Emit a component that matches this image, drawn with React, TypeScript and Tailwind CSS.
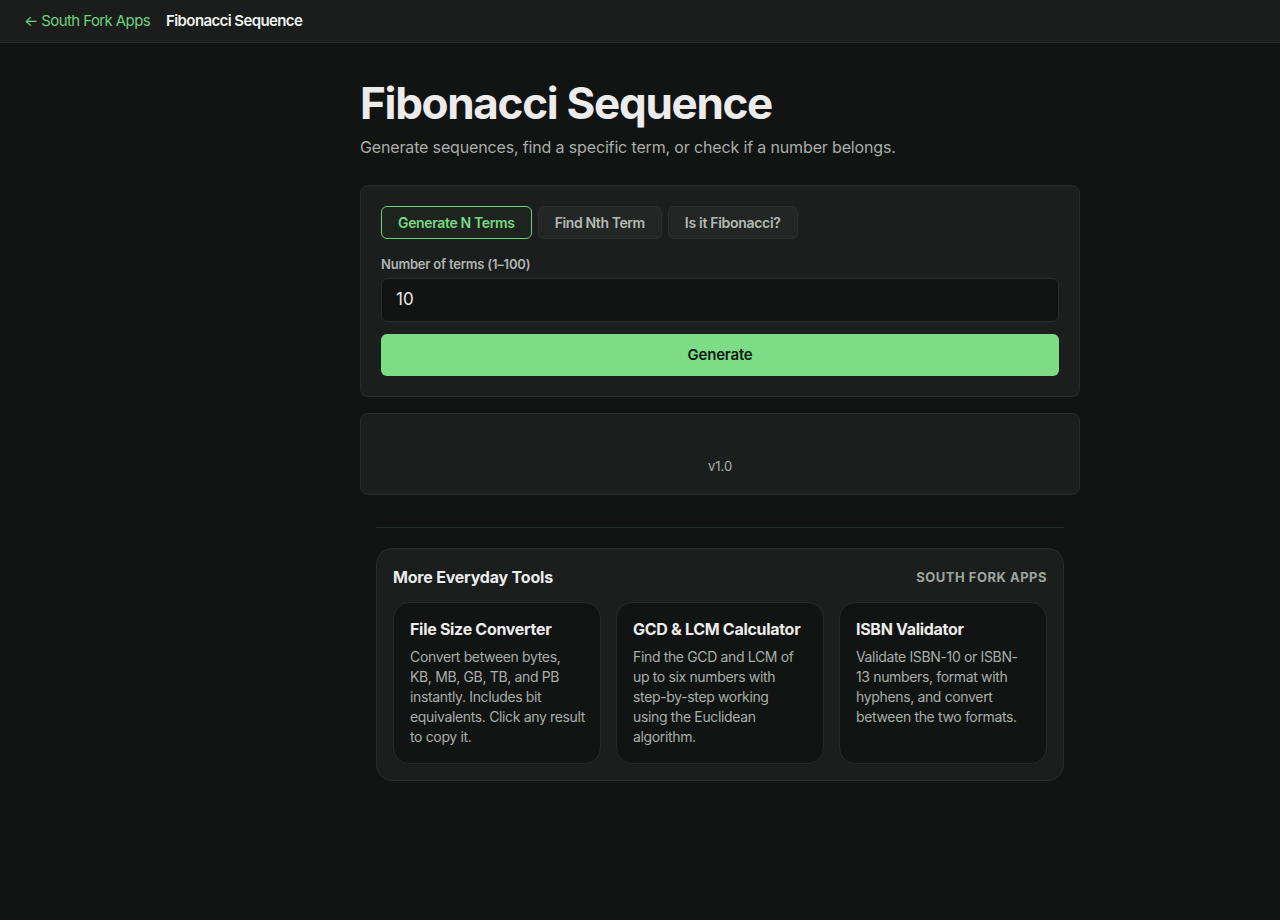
import React from "react";

const tools = [
  {
    title: "File Size Converter",
    lines: ["Convert between bytes,", "KB, MB, GB, TB, and PB", "instantly. Includes bit", "equivalents. Click any result", "to copy it."],
  },
  {
    title: "GCD & LCM Calculator",
    lines: ["Find the GCD and LCM of", "up to six numbers with", "step-by-step working", "using the Euclidean", "algorithm."],
  },
  {
    title: "ISBN Validator",
    lines: ["Validate ISBN-10 or ISBN-", "13 numbers, format with", "hyphens, and convert", "between the two formats."],
  },
];

export default function App() {
  return (
    <div
      className="min-h-[920px] bg-[#121413] text-[#e8e9e8]"
      style={{ fontFamily: "Inter, 'Noto Sans', sans-serif" }}
    >
      <header className="h-[43px] bg-[#1a1d1b] border-b border-[#262b27] flex items-center px-6 gap-4">
        <a className="text-[15px] text-[#6fd17c] tracking-[-0.6px]">← South Fork Apps</a>
        <span className="text-[15px] font-semibold text-[#f0f1f0] tracking-[-0.6px]">Fibonacci Sequence</span>
      </header>

      <main className="w-[720px] ml-[360px] pt-[33px]">
        <h1 className="text-[44px] leading-[54px] font-bold tracking-[-1.3px] text-[#ececec]">Fibonacci Sequence</h1>
        <p className="mt-[5px] text-[16px] leading-[24px] text-[#a9aeaa] tracking-[-0.15px]">
          Generate sequences, find a specific term, or check if a number belongs.
        </p>

        <section className="mt-[26px] bg-[#1b1e1c] border border-[#2a2e2b] rounded-lg p-5">
          <div className="flex gap-[6px]">
            <button className="h-[33px] px-4 rounded-md border border-[#6fd17c] text-[#78d884] text-[14px] font-semibold tracking-[-0.35px] bg-[#1d231e]">
              Generate N Terms
            </button>
            <button className="h-[33px] px-4 rounded-md border border-[#2c302d] bg-[#232624] text-[#b5b9b6] text-[14px] font-semibold tracking-[-0.4px]">
              Find Nth Term
            </button>
            <button className="h-[33px] px-4 rounded-md border border-[#2c302d] bg-[#232624] text-[#b5b9b6] text-[14px] font-semibold tracking-[-0.3px]">
              Is it Fibonacci?
            </button>
          </div>
          <label className="block mt-[16px] text-[13px] leading-[18px] font-semibold text-[#b0b4b1] tracking-[-0.2px]">
            Number of terms (1–100)
          </label>
          <div className="mt-[5px] h-[44px] rounded-md border border-[#2a2e2b] bg-[#121413] flex items-center px-[14px] text-[17px] text-[#e8e9e8]">
            10
          </div>
          <button className="mt-3 w-full h-[42px] rounded-md bg-[#7ddc86] text-[#0f1a10] text-[15px] font-semibold tracking-[-0.2px]">
            Generate
          </button>
        </section>

        <section className="mt-4 h-[82px] bg-[#1b1e1c] border border-[#2a2e2b] rounded-lg flex items-end justify-center pb-[18px]">
          <span className="text-[13px] text-[#a9aeaa]">v1.0</span>
        </section>

        <div className="mx-4 mt-8 border-t border-[#243027]" />

        <section className="mx-4 mt-5 bg-[#1b1e1c] border border-[#2a2e2b] rounded-2xl px-4 pt-4 pb-[16px]">
          <div className="flex items-center justify-between">
            <h2 className="text-[16px] leading-[24px] font-bold tracking-[-0.2px] text-[#ececec]">More Everyday Tools</h2>
            <span className="text-[13px] font-bold tracking-[0.5px] text-[#9fa4a0] pt-[2px]">SOUTH FORK APPS</span>
          </div>
          <div className="mt-[13px] grid grid-cols-3 gap-[15px]">
            {tools.map((t) => (
              <div key={t.title} className="bg-[#121413] border border-[#272b28] rounded-2xl px-4 pt-[14px] pb-[16px]">
                <h3 className="text-[16px] font-bold tracking-[-0.3px] text-[#ececec] leading-[24px]">{t.title}</h3>
                <p className="mt-[6px] text-[14px] leading-[20px] text-[#a9aeaa] tracking-[-0.35px]">
                  {t.lines.map((l) => (
                    <span key={l} className="block whitespace-nowrap">{l}</span>
                  ))}
                </p>
              </div>
            ))}
          </div>
        </section>
      </main>
    </div>
  );
}
